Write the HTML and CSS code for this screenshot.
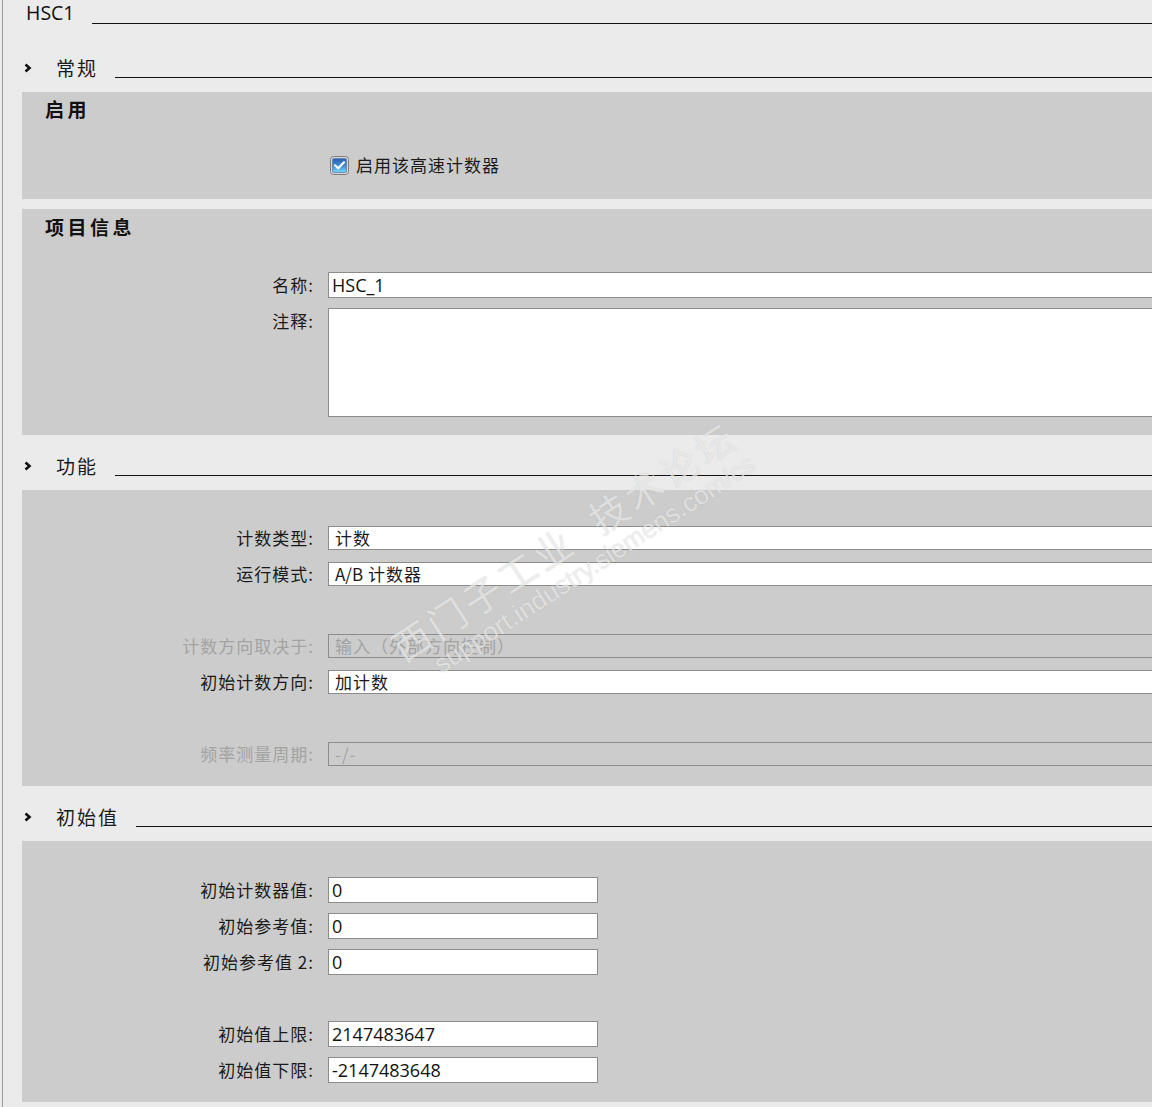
FILE: index.html
```html
<!DOCTYPE html>
<html lang="zh-CN">
<head>
<meta charset="utf-8">
<title>HSC1</title>
<link rel="stylesheet" href="styles.css">
</head>
<body>
<div class="frame">
  <div class="title-row">
    <span class="title">HSC1</span>
    <span class="rule"></span>
  </div>

  <div class="section-row">
    <svg class="chev" width="8" height="10" viewBox="0 0 8 10"><path d="M1.5 1.5 L5.5 5 L1.5 8.5" fill="none" stroke="#111" stroke-width="2.6"/></svg>
    <span class="section-title">常规</span>
    <span class="rule"></span>
  </div>

  <div class="panel panel-enable">
    <div class="panel-head">启用</div>
    <div class="grid">
      <div></div>
      <div class="check-row">
        <svg class="checkbox" width="19" height="19" viewBox="0 0 19 19">
          <defs>
            <linearGradient id="cbg" x1="0" y1="0" x2="0" y2="1">
              <stop offset="0" stop-color="#2d5fae"/>
              <stop offset="0.55" stop-color="#3f8fd8"/>
              <stop offset="1" stop-color="#7fd8f4"/>
            </linearGradient>
          </defs>
          <rect x="0.5" y="0.5" width="18" height="18" rx="3" fill="#d8d8d8" stroke="#7d7d7d"/>
          <rect x="2.5" y="2.5" width="14" height="14" rx="1.5" fill="url(#cbg)" stroke="#5c7fae" stroke-width="0.8"/>
          <path d="M5 9.3 L8.2 12.3 L14 6.3" fill="none" stroke="#fff" stroke-width="2.2" stroke-linecap="round" stroke-linejoin="round"/>
        </svg>
        <span class="check-label">启用该高速计数器</span>
      </div>
    </div>
  </div>

  <div class="panel panel-info">
    <div class="panel-head">项目信息</div>
    <div class="grid grid-info">
      <div class="label">名称:</div>
      <div class="field text wide">HSC_1</div>
      <div class="label top">注释:</div>
      <div class="field area wide"></div>
    </div>
  </div>

  <div class="section-row">
    <svg class="chev" width="8" height="10" viewBox="0 0 8 10"><path d="M1.5 1.5 L5.5 5 L1.5 8.5" fill="none" stroke="#111" stroke-width="2.6"/></svg>
    <span class="section-title">功能</span>
    <span class="rule"></span>
  </div>

  <div class="panel panel-func">
    <div class="grid grid-func">
      <div class="label">计数类型:</div>
      <div class="field drop wide">计数</div>
      <div class="label">运行模式:</div>
      <div class="field drop wide"><span class="latin">A/B</span> 计数器</div>
      <div class="spacer"></div>
      <div class="spacer"></div>
      <div class="label disabled">计数方向取决于:</div>
      <div class="field drop wide off">输入（外部方向控制）</div>
      <div class="label">初始计数方向:</div>
      <div class="field drop wide">加计数</div>
      <div class="spacer"></div>
      <div class="spacer"></div>
      <div class="label disabled">频率测量周期:</div>
      <div class="field drop wide off">-/-</div>
    </div>
  </div>

  <div class="section-row">
    <svg class="chev" width="8" height="10" viewBox="0 0 8 10"><path d="M1.5 1.5 L5.5 5 L1.5 8.5" fill="none" stroke="#111" stroke-width="2.6"/></svg>
    <span class="section-title">初始值</span>
    <span class="rule"></span>
  </div>

  <div class="panel panel-init">
    <div class="grid grid-init">
      <div class="label">初始计数器值:</div>
      <div class="field text short">0</div>
      <div class="label">初始参考值:</div>
      <div class="field text short">0</div>
      <div class="label">初始参考值 2:</div>
      <div class="field text short">0</div>
      <div class="spacer tall"></div>
      <div class="spacer tall"></div>
      <div class="label">初始值上限:</div>
      <div class="field text short">2147483647</div>
      <div class="label">初始值下限:</div>
      <div class="field text short">-2147483648</div>
    </div>
  </div>

  <div class="watermark">
    <span class="wm-cn">西门子工业&nbsp;&nbsp;技术论坛</span>
    <span class="wm-url">support.industry.siemens.com/cs</span>
  </div>
</div>
</body>
</html>
```

FILE: styles.css
```css
html, body {
  margin: 0;
  padding: 0;
  overflow: hidden;
}
body {
  background: #ebebeb;
  font-family: "Noto Sans CJK SC", "Noto Sans", sans-serif;
  color: #1a1a1a;
  width: 1152px;
  height: 1107px;
}
.frame {
  position: relative;
  margin-left: 2px;
  border-left: 1px solid #9c9c9c;
  height: 1107px;
}

.title-row {
  display: flex;
  height: 24px;
  padding-left: 23px;
}
.title {
  font-family: "Open Sans", "Liberation Sans", sans-serif;
  font-size: 19.5px;
  line-height: 24px;
  color: #111;
  margin-top: 1px;
}
.rule {
  flex: 1;
  border-bottom: 1px solid #111;
  margin-left: 17px;
}

.section-row {
  display: flex;
  align-items: stretch;
  height: 24px;
  padding-left: 21px;
  margin-top: 17px;
}
.title-row + .section-row {
  margin-top: 30px;
}
.chev {
  align-self: center;
  margin-top: 4px;
  width: 8px;
  height: 10px;
}
.section-title {
  margin-left: 24px;
  font-size: 19px;
  letter-spacing: 2px;
  line-height: 24px;
  margin-top: 2px;
  color: #1a1a1a;
}

.panel {
  background: #cccccc;
  margin-left: 19px;
  margin-right: -40px;
}
.section-row + .panel {
  margin-top: 14px;
}
.panel-enable {
  padding: 5px 0 21px;
  height: 81px;
}
.panel-info {
  margin-top: 10px;
  padding: 6px 0 18px;
}
.panel-func {
  padding: 36px 0 20px;
}
.panel-init {
  padding: 36px 0 19px;
}

.panel-head {
  margin-left: 23px;
  font-size: 19px;
  font-weight: 700;
  letter-spacing: 3.5px;
  line-height: 24px;
  color: #111;
}

.grid {
  display: grid;
  grid-template-columns: 291px 1fr;
  column-gap: 15px;
}
.panel-enable .grid {
  margin-top: 32px;
}
.grid-info {
  margin-top: 33px;
  row-gap: 10px;
}
.grid-func {
  row-gap: 12px;
}
.grid-init {
  row-gap: 10px;
}

.check-row {
  display: flex;
  align-items: center;
  height: 24px;
  margin-left: 2px;
}
.checkbox {
  flex: none;
}
.check-label {
  margin-left: 7px;
  font-size: 17px;
  line-height: 24px;
  letter-spacing: 1px;
  color: #1a1a1a;
}

.label {
  text-align: right;
  font-size: 17px;
  line-height: 24px;
  letter-spacing: 1px;
  margin-right: -1px;
  align-self: center;
  color: #1a1a1a;
  white-space: nowrap;
}
.label.top {
  align-self: start;
  line-height: 26px;
}
.label.disabled {
  color: #a3a3a3;
}

.field {
  box-sizing: border-box;
  background: #fff;
  border: 1px solid #8c8c8c;
  white-space: nowrap;
  overflow: hidden;
}
.field.text {
  height: 26px;
  line-height: 24px;
  padding-left: 3px;
  font-family: "Open Sans", "Noto Sans", sans-serif;
  font-size: 18px;
  color: #111;
}
.field.drop {
  height: 24px;
  line-height: 22px;
  padding-left: 6px;
  font-size: 17px;
  letter-spacing: 1px;
  color: #1a1a1a;
}
.latin {
  letter-spacing: 0;
}
.field.area {
  height: 109px;
}
.field.short {
  width: 270px;
}
.field.off {
  background: #cccccc;
  color: #a3a3a3;
}
.spacer {
  height: 24px;
}
.spacer.tall {
  height: 26px;
}

.watermark {
  position: absolute;
  left: 380px;
  top: 632px;
  transform: rotate(-33deg);
  transform-origin: left top;
  pointer-events: none;
  display: flex;
  flex-direction: column;
  color: rgba(255, 255, 255, 0.6);
  white-space: nowrap;
  text-shadow: 0 0 1px rgba(120, 120, 120, 0.35);
}
.wm-cn {
  font-size: 38px;
  letter-spacing: 4px;
  line-height: 44px;
}
.wm-url {
  font-family: "Liberation Sans", Arial, sans-serif;
  font-size: 26px;
  line-height: 28px;
  margin-left: 26px;
}
```
